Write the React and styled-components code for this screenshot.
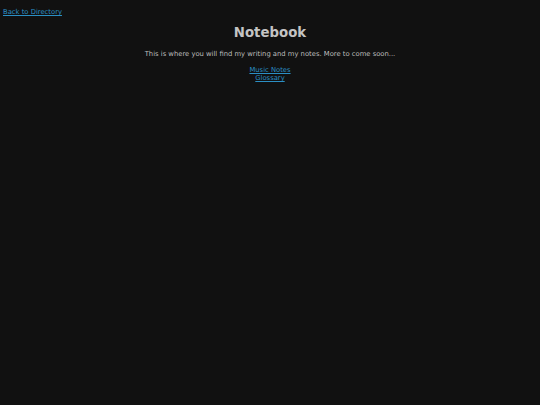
import styled, { createGlobalStyle } from 'styled-components';

const GlobalStyle = createGlobalStyle`
  html, body {
    margin: 0;
    padding: 0;
    background-color: #111111;
    height: 100%;
  }
  body {
    font-family: "DejaVu Sans", Verdana, sans-serif;
    color: #bdbdbd;
  }
`

const Page = styled.div`
  padding: 8px 3px;
  font-size: 6.8px;
  line-height: 8px;
`

const BackLink = styled.a`
  color: #2b8fc4;
  text-decoration: underline;
`

const Main = styled.div`
  display: flex;
  flex-direction: column;
  align-items: center;
  text-align: center;
`

const Title = styled.h1`
  font-size: 13.3px;
  font-weight: bold;
  color: #c4c4c4;
  margin: 8px 0 9px;
  line-height: 17px;
`

const Intro = styled.p`
  margin: 0 0 8px;
`

const NavLink = styled.a`
  display: block;
  color: #2b8fc4;
  text-decoration: underline;
`

const App = () => {
  return (
    <>
      <GlobalStyle />
      <Page>
        <BackLink href="#">Back to Directory</BackLink>
        <Main>
          <Title>Notebook</Title>
          <Intro>This is where you will find my writing and my notes. More to come soon...</Intro>
          <NavLink href="#">Music Notes</NavLink>
          <NavLink href="#">Glossary</NavLink>
        </Main>
      </Page>
    </>
  );
};

export default App;
